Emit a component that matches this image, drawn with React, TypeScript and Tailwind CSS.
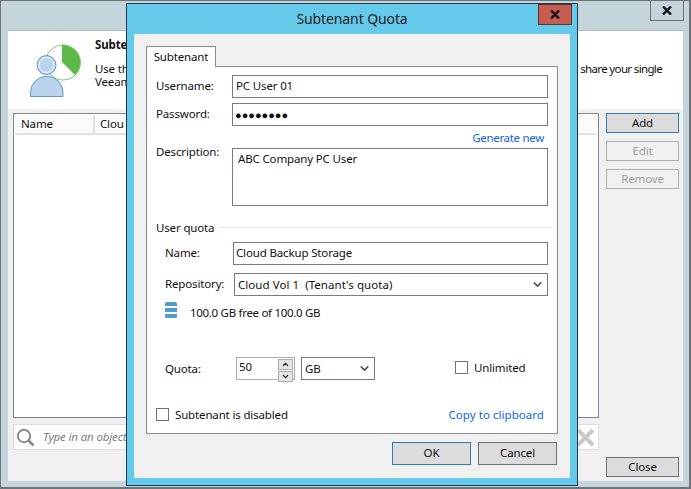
import React from 'react';
import { ChevronDown, ChevronUp } from 'lucide-react';

const inputBox = 'border border-[#7a7a7a] bg-white flex items-center';

const WinButton = ({ label, className = '' }: { label: string; className?: string }) => (
  <button className={`h-[23px] pb-px border flex items-center justify-center ${className}`}>{label}</button>
);

const SideButton = ({ label, className = '' }: { label: string; className?: string }) => (
  <button className={`h-[20px] w-[73px] border flex items-center justify-center ${className}`}>{label}</button>
);

const CloseGlyph = () => (
  <svg width="10" height="9" viewBox="0 0 10 9">
    <path d="M1 0.5 L9 8.5 M9 0.5 L1 8.5" stroke="#111" strokeWidth="2.4" fill="none" />
  </svg>
);

const TenantIcon = () => (
  <svg width="54" height="54" viewBox="0 0 54 54" className="ml-[22px] mt-[13px] shrink-0">
    <circle cx="33" cy="18.5" r="17.5" fill="#fff" stroke="#7fc66f" strokeWidth="1" />
    <path d="M32 1 A17.5 17.5 0 0 1 45 31 L32 18 Z" fill="#5bb94a" />
    <circle cx="16.5" cy="21" r="9.5" fill="#bcd3ec" stroke="#5b9bd0" strokeWidth="1" />
    <circle cx="16.5" cy="21" r="7.5" fill="none" stroke="#fff" strokeWidth="0.8" />
    <path d="M0.5 52.5 V48.5 A16.25 16.25 0 0 1 33 48.5 V52.5 Z" fill="#bcd3ec" stroke="#5b9bd0" strokeWidth="1" />
  </svg>
);

const SearchIcon = () => (
  <svg width="19" height="19" viewBox="0 0 19 19" className="shrink-0">
    <circle cx="8" cy="8" r="6.2" fill="none" stroke="#8a8a8a" strokeWidth="2" />
    <path d="M12.5 12.5 L17.5 17.5" stroke="#8a8a8a" strokeWidth="2.6" />
  </svg>
);

const DbIcon = () => (
  <svg width="12" height="16" viewBox="0 0 12 16" className="shrink-0">
    <path d="M0 1.5 Q0 0 2 0 H10 Q12 0 12 1.5 V4 H0 Z" fill="#4d9ccb" />
    <rect x="0" y="6" width="12" height="4" fill="#4d9ccb" />
    <path d="M0 12 H12 V14.5 Q12 16 10 16 H2 Q0 16 0 14.5 Z" fill="#4d9ccb" />
  </svg>
);

const Checkbox = () => <span className="w-[13px] h-[13px] border border-[#707070] bg-white shrink-0" />;

export default function App() {
  return (
    <div className="relative w-[691px] h-[489px] overflow-hidden bg-[#c3d5db] border-t border-l border-r-2 border-b-2 border-[#6d7378] text-[11.5px] leading-none text-[#111] font-['Noto_Sans',sans-serif] tracking-[-0.15px]">
      {/* window behind */}
      <div className="flex justify-end pr-[5px] h-[29px]">
        <div className="w-[34px] h-[21px] -mt-px border border-[#6d7378] flex items-center justify-center">
          <CloseGlyph />
        </div>
      </div>
      <div className="ml-[7px] mr-[6px] h-[451px] border-t border-[#a8bcc4] bg-[#f0f0f0] flex flex-col">
        <div className="h-[78px] bg-white flex shrink-0">
          <TenantIcon />
          <div className="flex-1 pl-[11px] pr-[21px] pt-[8px]">
            <div className="font-bold">Subte</div>
            <div className="mt-[11px] flex justify-between leading-[13px]">
              <div>Use th<br />Veeam</div>
              <div className="whitespace-nowrap tracking-[-0.65px]">share your single</div>
            </div>
          </div>
        </div>
        <div className="flex-1 flex pl-[5px] pr-[4px] pt-[4px] pb-[4px] gap-[7px]">
          <div className="w-[586px] flex flex-col">
            <div className="h-[305px] border border-[#82878f] bg-white p-px">
              <div className="h-[20px] flex bg-[#fafafa] border-b-2 border-[#e2e2e2]">
                <div className="w-[80px] pl-[6px] pt-[3px] border-r-2 border-[#e2e2e2]">Name</div>
                <div className="pl-[5px] pt-[3px]">Clou</div>
              </div>
            </div>
            <div className="mt-[6px] h-[26px] border border-[#dcdcdc] bg-white flex items-center pl-[2px] pr-[3px]">
              <SearchIcon />
              <span className="ml-[8px] italic text-[#7d7d7d]">Type in an object</span>
              <svg width="19" height="19" viewBox="0 0 19 19" className="ml-auto">
                <path d="M2 2 L17 17 M17 2 L2 17" stroke="#c8c8c8" strokeWidth="4" />
              </svg>
            </div>
          </div>
          <div className="flex flex-col">
            <SideButton label="Add" className="bg-[#dcdcdc] border-[#2f7cb0]" />
            <SideButton label="Edit" className="mt-[8px] bg-[#f0f0f0] border-[#b0b0b0] text-[#a0a0a0]" />
            <SideButton label="Remove" className="mt-[8px] bg-[#f0f0f0] border-[#b0b0b0] text-[#a0a0a0]" />
            <SideButton label="Close" className="mt-auto bg-[#dcdcdc] border-[#707070]" />
          </div>
        </div>
      </div>

      {/* Subtenant Quota dialog */}
      <div className="absolute left-[125px] top-[2px] w-[452px] h-[483px] border border-[#1e3a4c] bg-[#65c9ea] flex flex-col">
        <div className="relative h-[30px] shrink-0 flex items-center justify-center text-[14px] tracking-[-0.1px] text-[#222]">
          Subtenant Quota
          <div className="absolute right-[5px] top-0 w-[34px] h-[21px] bg-[#c75d50] border border-[#5a3430] flex items-center justify-center">
            <CloseGlyph />
          </div>
        </div>
        <div className="mx-[7px] h-[444px] bg-[#f0f0f0] pl-[12px] pr-[12px] pt-[12px]">
          <div className="relative z-10 w-[70px] h-[21px] border border-b-0 border-[#8a8a93] bg-white flex items-center justify-center -mb-px">
            Subtenant
          </div>
          <div className="h-[368px] border border-[#8a8a93] bg-white pl-[9px] pr-[9px] pt-[8px] flex flex-col">
            <div className="flex items-center h-[23px]">
              <span className="w-[76px] -mt-[2px]">Username:</span>
              <div className={`${inputBox} w-[316px] h-full pl-[3px] pb-[2px]`}>PC User 01</div>
            </div>
            <div className="flex items-center h-[23px] mt-[5px]">
              <span className="w-[76px] -mt-[2px]">Password:</span>
              <div className={`${inputBox} w-[316px] h-full pl-[2px] text-[11px] tracking-[0px]`}>●●●●●●●●</div>
            </div>
            <div className="h-[22px] pt-[2px] pr-[4px] w-[392px] flex items-center justify-end text-[#0f66e8] tracking-[-0.3px]">Generate new</div>
            <div className="flex h-[58px]">
              <span className="w-[76px] -mt-[2px]">Description:</span>
              <div className="border border-[#7a7a7a] w-[316px] pl-[5px] pt-[4px]">ABC Company PC User</div>
            </div>
            <div className="flex items-center mt-[15px] h-[13px]">
              <span>User quota</span>
              <span className="ml-[5px] h-px flex-1 -mr-[2px] bg-[#dfe6ea]" />
            </div>
            <div className="flex items-center h-[23px] mt-[8px] pl-[9px]">
              <span className="w-[68px] -mt-[2px]">Name:</span>
              <div className={`${inputBox} w-[315px] h-full pl-[2px] pb-[2px]`}>Cloud Backup Storage</div>
            </div>
            <div className="flex items-center h-[23px] mt-[8px] pl-[9px]">
              <span className="w-[69px] -mt-[2px]">Repository:</span>
              <div className={`${inputBox} w-[314px] h-full pl-[3px] justify-between pr-[3px] tracking-[0.05px]`}>
                Cloud Vol 1&nbsp; (Tenant's quota)
                <ChevronDown size={13} strokeWidth={3} className="text-[#555]" />
              </div>
            </div>
            <div className="flex items-center mt-[6px] h-[16px] pl-[9px]">
              <DbIcon />
              <span className="ml-[13px] mt-[6px] tracking-[-0.3px]">100.0 GB free of 100.0 GB</span>
            </div>
            <div className="flex items-center h-[23px] mt-[39px] pl-[9px]">
              <span className="w-[71px]">Quota:</span>
              <div className="w-[59px] h-full border border-[#adadad] flex justify-between pl-[2px] items-center">
                <span className="-mt-[3px]">50</span>
                <div className="flex flex-col gap-px w-[17px] h-full p-px">
                  <span className="flex-1 bg-[#e6e6e6] border border-[#adadad] flex items-center justify-center"><ChevronUp size={9} strokeWidth={3} /></span>
                  <span className="flex-1 bg-[#e6e6e6] border border-[#adadad] flex items-center justify-center"><ChevronDown size={9} strokeWidth={3} /></span>
                </div>
              </div>
              <div className={`${inputBox} ml-[6px] w-[74px] h-full pl-[3px] justify-between pr-[3px]`}>
                GB
                <ChevronDown size={13} strokeWidth={3} className="text-[#555]" />
              </div>
              <div className="ml-[80px] flex items-center -mt-[2px]">
                <Checkbox />
                <span className="ml-[6px]">Unlimited</span>
              </div>
            </div>
            <div className="flex items-center mt-[28px] h-[13px]">
              <Checkbox />
              <span className="ml-[6px]">Subtenant is disabled</span>
              <span className="ml-auto mr-[4px] text-[#0f66e8] tracking-[0.05px]">Copy to clipboard</span>
            </div>
          </div>
          <div className="flex justify-end gap-[7px] mt-[8px] pr-px">
            <WinButton label="OK" className="w-[79px] bg-[#dcdcdc] border-[#2f7cb0]" />
            <WinButton label="Cancel" className="w-[79px] bg-[#dcdcdc] border-[#707070]" />
          </div>
        </div>
      </div>
    </div>
  );
}
